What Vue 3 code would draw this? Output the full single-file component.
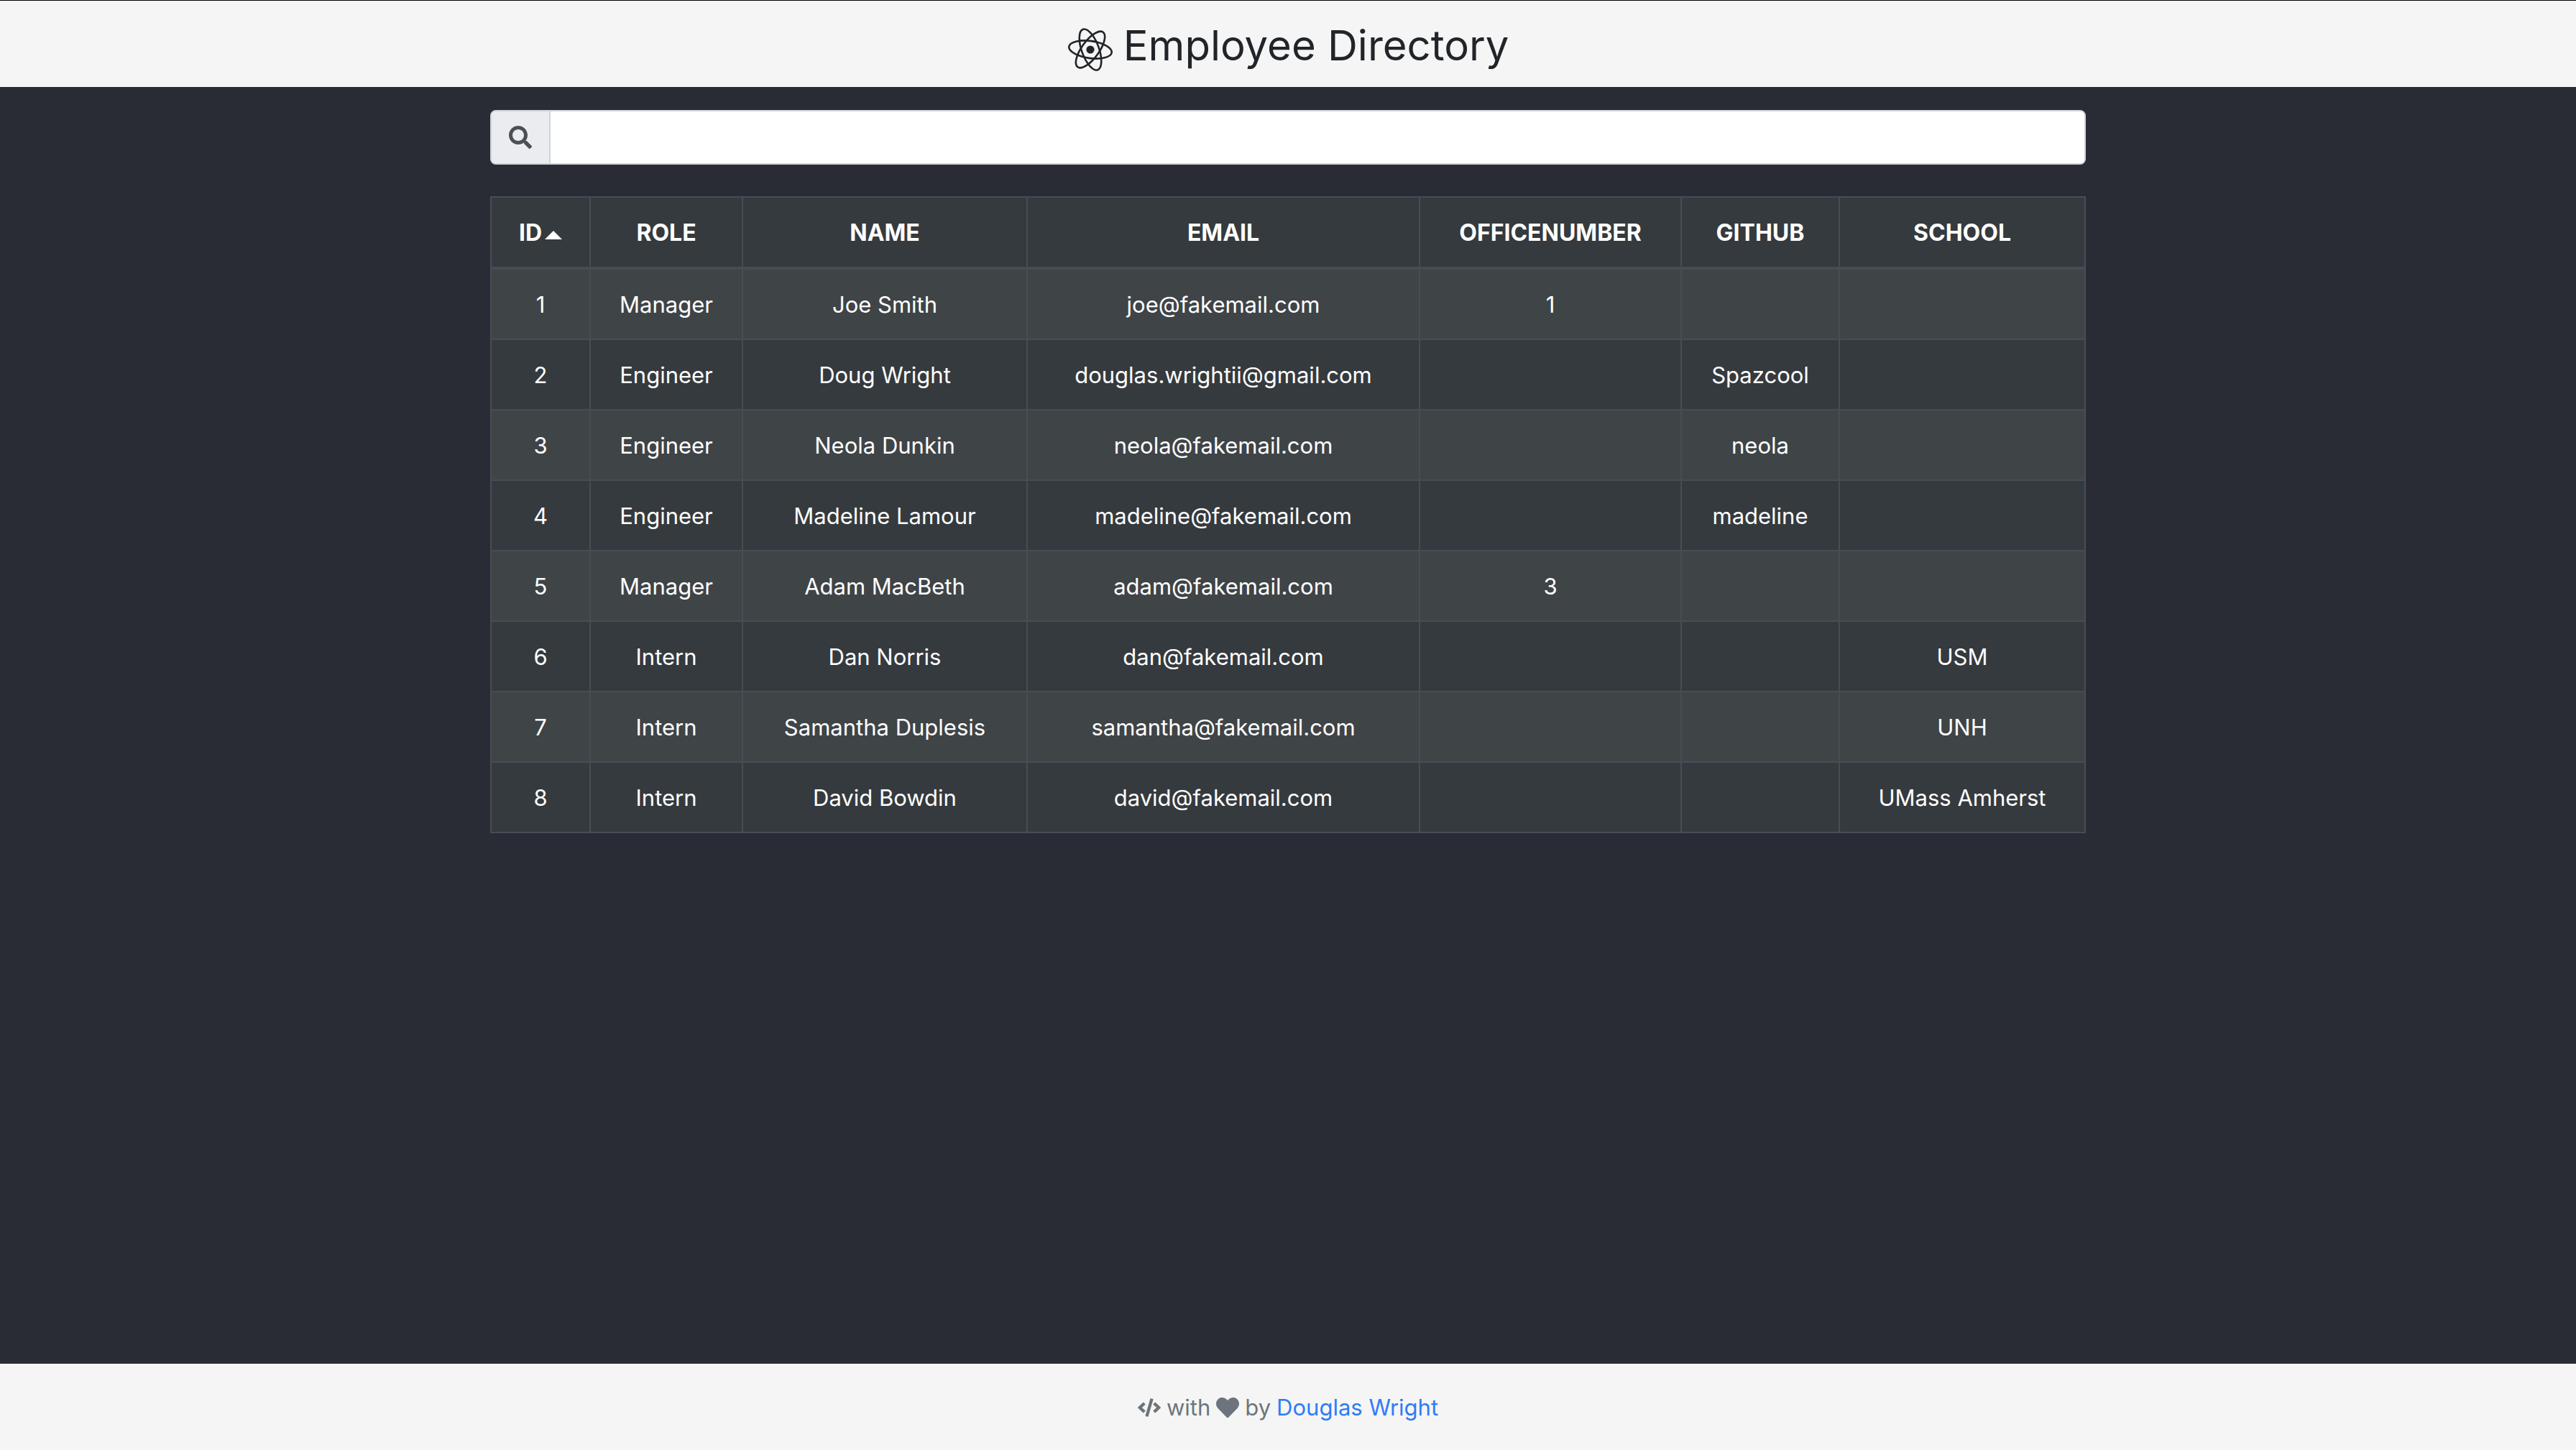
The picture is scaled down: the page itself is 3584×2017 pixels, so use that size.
<script setup>
import { computed, ref } from 'vue'

const columns = [
  { key: 'id', label: 'ID', width: 138 },
  { key: 'role', label: 'Role', width: 212 },
  { key: 'name', label: 'Name', width: 396 },
  { key: 'email', label: 'Email', width: 546 },
  { key: 'officeNumber', label: 'OfficeNumber', width: 364 },
  { key: 'github', label: 'GitHub', width: 220 },
  { key: 'school', label: 'School', width: 342 },
]

const employees = [
  { id: 1, role: 'Manager', name: 'Joe Smith', email: 'joe@fakemail.com', officeNumber: 1 },
  { id: 2, role: 'Engineer', name: 'Doug Wright', email: 'douglas.wrightii@gmail.com', github: 'Spazcool' },
  { id: 3, role: 'Engineer', name: 'Neola Dunkin', email: 'neola@fakemail.com', github: 'neola' },
  { id: 4, role: 'Engineer', name: 'Madeline Lamour', email: 'madeline@fakemail.com', github: 'madeline' },
  { id: 5, role: 'Manager', name: 'Adam MacBeth', email: 'adam@fakemail.com', officeNumber: 3 },
  { id: 6, role: 'Intern', name: 'Dan Norris', email: 'dan@fakemail.com', school: 'USM' },
  { id: 7, role: 'Intern', name: 'Samantha Duplesis', email: 'samantha@fakemail.com', school: 'UNH' },
  { id: 8, role: 'Intern', name: 'David Bowdin', email: 'david@fakemail.com', school: 'UMass Amherst' },
]

const query = ref('')
const sortKey = ref('id')
const ascending = ref(true)

function sortBy(key) {
  ascending.value = sortKey.value === key ? !ascending.value : true
  sortKey.value = key
}

const rows = computed(() => {
  const needle = query.value.trim().toLowerCase()
  const found = employees.filter((person) =>
    Object.values(person).some((value) => String(value).toLowerCase().includes(needle)),
  )
  const direction = ascending.value ? 1 : -1
  return found.sort((a, b) => {
    const left = String(a[sortKey.value] ?? '')
    const right = String(b[sortKey.value] ?? '')
    return direction * left.localeCompare(right, undefined, { numeric: true })
  })
})
</script>

<template>
  <div class="page">
    <header class="header">
      <h1 class="title">
        <svg class="logo" viewBox="0 0 64 64" aria-hidden="true">
          <g fill="none" stroke="currentColor" stroke-width="2.6">
            <ellipse cx="32" cy="32" rx="30" ry="12" transform="rotate(8 32 32)" />
            <ellipse cx="32" cy="32" rx="30" ry="12" transform="rotate(70 32 32)" />
            <ellipse cx="32" cy="32" rx="30" ry="12" transform="rotate(126 32 32)" />
          </g>
          <circle cx="32" cy="32" r="5.6" fill="currentColor" />
        </svg>
        <span>Employee Directory</span>
      </h1>
    </header>

    <main class="container">
      <div class="search">
        <label class="search-label" for="search" aria-label="Search employees">
          <svg class="icon" viewBox="0 0 512 512" aria-hidden="true">
            <path fill="currentColor" d="M505 442.7L405.3 343c-4.5-4.5-10.6-7-17-7H372c27.6-35.3 44-79.7 44-128C416 93.1 322.9 0 208 0S0 93.1 0 208s93.1 208 208 208c48.3 0 92.7-16.4 128-44v16.3c0 6.4 2.5 12.5 7 17l99.7 99.7c9.4 9.4 24.6 9.4 33.9 0l28.3-28.3c9.4-9.4 9.4-24.6.1-34zM208 336c-70.7 0-128-57.2-128-128 0-70.7 57.2-128 128-128 70.7 0 128 57.2 128 128 0 70.7-57.2 128-128 128z" />
          </svg>
        </label>
        <input id="search" v-model="query" class="search-input" type="text" />
      </div>

      <table class="table">
        <colgroup>
          <col v-for="column in columns" :key="column.key" :style="{ width: column.width + 'px' }" />
        </colgroup>
        <thead>
          <tr>
            <th v-for="column in columns" :key="column.key" scope="col">
              <button class="sort" type="button" @click="sortBy(column.key)">
                {{ column.label
                }}<span v-if="sortKey === column.key" class="caret" :class="{ down: !ascending }"></span>
              </button>
            </th>
          </tr>
        </thead>
        <tbody>
          <tr v-for="person in rows" :key="person.id">
            <td v-for="column in columns" :key="column.key">{{ person[column.key] }}</td>
          </tr>
        </tbody>
      </table>
    </main>

    <footer class="footer">
      <svg class="icon" viewBox="0 0 640 512" aria-hidden="true">
        <path fill="currentColor" d="M278.9 511.5l-61-17.7c-6.4-1.8-10-8.5-8.2-14.9L346.2 8.7c1.8-6.4 8.5-10 14.9-8.2l61 17.7c6.4 1.8 10 8.5 8.2 14.9L293.8 503.3c-1.9 6.4-8.5 10.1-14.9 8.2zm-114-112.2l43.5-46.4c4.6-4.9 4.3-12.7-.8-17.2L117 256l90.6-79.7c5.1-4.5 5.5-12.3.8-17.2l-43.5-46.4c-4.5-4.8-12.1-5.1-17-.5L3.8 247.2c-5.1 4.7-5.1 12.8 0 17.5l144.1 135.1c4.9 4.6 12.5 4.4 17-.5zm327.2.6l144.1-135.1c5.1-4.7 5.1-12.8 0-17.5L492.1 112.1c-4.8-4.5-12.4-4.3-17 .5L431.6 159c-4.6 4.9-4.3 12.7.8 17.2L523 256l-90.6 79.7c-5.1 4.5-5.5 12.3-.8 17.2l43.5 46.4c4.5 4.9 12.1 5.1 17 .6z" />
      </svg>
      <span>with</span>
      <svg class="icon" viewBox="0 0 512 512" aria-hidden="true">
        <path fill="currentColor" d="M462.3 62.6C407.5 15.9 326 24.3 275.7 76.2L256 96.5l-19.7-20.3C186.1 24.3 104.5 15.9 49.7 62.6c-62.8 53.6-66.1 149.8-9.9 207.9l193.5 199.8c12.5 12.9 32.8 12.9 45.3 0l193.5-199.8c56.3-58.1 53-154.3-9.8-207.9z" />
      </svg>
      <span>by</span>
      <a class="link" href="#">Douglas Wright</a>
    </footer>
  </div>
</template>

<style>
body {
  margin: 0;
  background: #2a2c35;
}
</style>

<style scoped>
.page {
  display: flex;
  flex-direction: column;
  min-height: 100vh;
  box-sizing: border-box;
  border-top: 1px solid #000;
  background: #2a2c35;
  color: #212529;
  font-family: Inter, "Liberation Sans", sans-serif;
  font-size: 31px;
  line-height: 48px;
}

.header {
  display: flex;
  justify-content: center;
  box-sizing: border-box;
  height: 120px;
  padding-top: 4px;
  background: #f5f5f5;
}

.title {
  display: flex;
  align-items: center;
  gap: 14px;
  margin: 0;
  font-size: 58px;
  font-weight: 400;
  line-height: 72px;
}

.logo {
  width: 64px;
  height: 64px;
  margin-top: 12px;
}

.container {
  flex: 1;
  width: 100%;
  max-width: 2220px;
  margin: 0 auto;
  padding: 32px 0;
}

.search {
  display: flex;
  box-sizing: border-box;
  height: 76px;
  margin-bottom: 44px;
  border: 2px solid #ced4da;
  border-radius: 8px;
  background: #fff;
  overflow: hidden;
}

.search-label {
  display: flex;
  align-items: center;
  padding: 0 24px;
  border-right: 2px solid #ced4da;
  background: #eaecf0;
  color: #495057;
}

.search-input {
  flex: 1;
  min-width: 0;
  padding: 0 24px;
  border: 0;
  outline: 0;
  background: #fff;
  color: #495057;
  font: inherit;
}

.icon {
  flex: none;
  width: 32px;
  height: 32px;
}

.table {
  width: 100%;
  table-layout: fixed;
  border-collapse: collapse;
  background: #353a3e;
  color: #fff;
  text-align: center;
}

.table th,
.table td {
  height: 48px;
  padding: 25px 0 23px;
  border: 2px solid #474d56;
}

.table thead th {
  border-bottom-width: 4px;
}

.table tbody tr:nth-child(odd) {
  background: rgba(255, 255, 255, 0.05);
}

.sort {
  display: block;
  width: 100%;
  padding: 0;
  border: 0;
  background: none;
  color: inherit;
  font: inherit;
  font-size: 32px;
  font-weight: 700;
  text-transform: uppercase;
  cursor: pointer;
}

.caret {
  display: inline-block;
  margin-left: 4px;
  border: 12px solid transparent;
  border-top-width: 0;
  border-bottom-color: currentColor;
  vertical-align: 2px;
}

.caret.down {
  border-top: 12px solid currentColor;
  border-bottom-width: 0;
}

.footer {
  display: flex;
  align-items: center;
  justify-content: center;
  gap: 8px;
  box-sizing: border-box;
  height: 120px;
  padding-top: 2px;
  background: #f5f5f5;
  color: #6c757d;
}

.link {
  color: #2f7cf6;
  text-decoration: none;
}
</style>
